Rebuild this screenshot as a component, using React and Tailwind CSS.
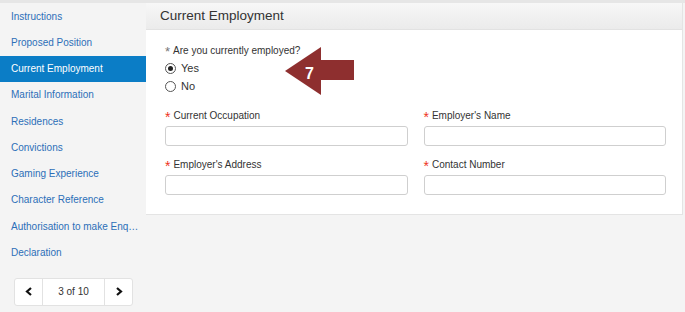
import React from 'react';

const items = [
  'Instructions',
  'Proposed Position',
  'Current Employment',
  'Marital Information',
  'Residences',
  'Convictions',
  'Gaming Experience',
  'Character Reference',
  'Authorisation to make Enq…',
  'Declaration',
];

function Field({ label }) {
  return (
    <div>
      <div className="flex items-center h-[16px] text-[10px] text-[#333]">
        <span className="text-[#e32] text-[14px] leading-none mr-[3px] mt-[3px]">*</span>
        {label}
      </div>
      <div className="mt-[3px] h-[20px] rounded-[3px] border border-[#cfcfcf] bg-white" />
    </div>
  );
}

export default function App() {
  return (
    <div
      className="w-[685px] h-[312px] bg-[#f4f4f4] border-t-[3px] border-[#e6e6e6] flex overflow-hidden"
      style={{ fontFamily: '"Liberation Sans", Arial, sans-serif' }}
    >
      {/* sidebar */}
      <div className="w-[146px] shrink-0 flex flex-col">
        {items.map((it) => {
          const active = it === 'Current Employment';
          return (
            <div
              key={it}
              className={
                'h-[26.25px] flex items-center pl-[11px] text-[10px] whitespace-nowrap ' +
                (active ? 'bg-[#0b7dc6] text-white' : 'text-[#2c6fb8]')
              }
            >
              {it}
            </div>
          );
        })}
        <div className="mt-[12px] ml-[14px] w-[119px] h-[28px] flex border border-[#e2e2e2] rounded-[3px] bg-white text-[10px] text-[#333]">
          <div className="w-[28px] flex items-center justify-center border-r border-[#e2e2e2]">
            <svg width="8" height="9" viewBox="0 0 8 9">
              <path d="M6 1 L2 4.5 L6 8" fill="none" stroke="#111" strokeWidth="2.2" />
            </svg>
          </div>
          <div className="flex-1 flex items-center justify-center">3 of 10</div>
          <div className="w-[28px] flex items-center justify-center border-l border-[#e2e2e2]">
            <svg width="8" height="9" viewBox="0 0 8 9">
              <path d="M2 1 L6 4.5 L2 8" fill="none" stroke="#111" strokeWidth="2.2" />
            </svg>
          </div>
        </div>
      </div>

      {/* main panel */}
      <div className="w-[537px] h-[212px] bg-white border-r border-b border-[#e4e4e4] flex flex-col">
        <div className="h-[27px] shrink-0 flex items-center pl-[14px] text-[13.5px] text-[#333] bg-gradient-to-b from-[#f7f7f7] to-[#ebebeb] border-b border-[#e2e2e2]">
          Current Employment
        </div>
        <div className="relative pl-[19px] pr-[16px] pt-[12px]">
          <div className="flex items-center h-[16px] text-[10px] text-[#333]">
            <span className="text-[#777] text-[13px] leading-none mr-[3px] mt-[3px]">*</span>
            Are you currently employed?
          </div>
          <div className="mt-[2px] flex items-center h-[17px] text-[11px] text-[#333]">
            <span className="w-[11px] h-[11px] rounded-full border border-[#555] flex items-center justify-center mr-[5px]">
              <span className="w-[5px] h-[5px] rounded-full bg-[#222]" />
            </span>
            Yes
          </div>
          <div className="mt-px flex items-center h-[17px] text-[11px] text-[#333]">
            <span className="w-[11px] h-[11px] rounded-full border border-[#555] mr-[5px]" />
            No
          </div>

          <div className="mt-[12px] grid grid-cols-2 gap-x-[16px] gap-y-[10px]">
            <Field label="Current Occupation" />
            <Field label="Employer's Name" />
            <Field label="Employer's Address" />
            <Field label="Contact Number" />
          </div>

          {/* callout arrow */}
          <div className="absolute left-[139px] top-[17px] w-[70px] h-[48px]">
            <svg width="70" height="48" viewBox="0 0 70 48">
              <path d="M0 24 L36 0 L36 13 L69 13 L69 33 L36 33 L36 48 Z" fill="#8e2f2f" />
            </svg>
            <span className="absolute left-[20px] top-[19px] text-[16px] font-bold text-white leading-none">7</span>
          </div>
        </div>
      </div>
    </div>
  );
}
